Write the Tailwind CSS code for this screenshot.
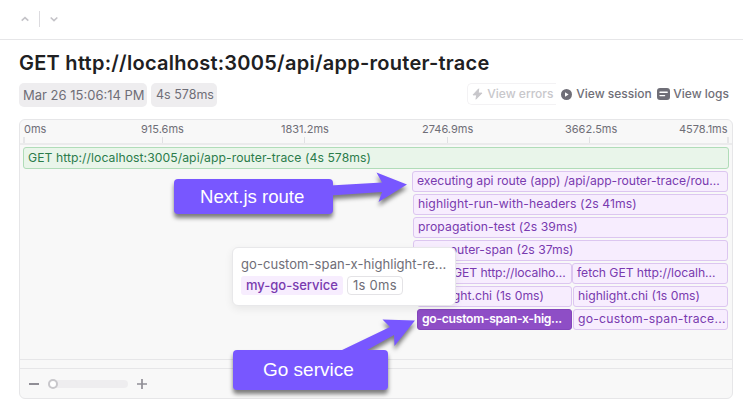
<!DOCTYPE html>
<html lang="en">
<head>
<meta charset="utf-8">
<title>Trace</title>
<script src="https://cdn.jsdelivr.net/npm/@tailwindcss/browser@4"></script>
</head>
<body class="relative w-[743px] h-[417px] overflow-hidden bg-white font-['Inter',sans-serif] text-[13px] text-[#6f6e77] whitespace-nowrap">
<header class="flex items-center h-10 border-b border-[#e6e6e8] pl-5 pb-px">
  <svg class="w-[10px] h-[10px]" viewBox="0 0 10 10" fill="none" stroke="#c4c3c8" stroke-width="1.6"><path d="M1.7 6.7 5 3.6l3.3 3.1"/></svg>
  <div class="w-px h-4 bg-[#dcdbdf] ml-[9px] mr-[9px]"></div>
  <svg class="w-[10px] h-[10px]" viewBox="0 0 10 10" fill="none" stroke="#c4c3c8" stroke-width="1.6"><path d="M1.7 3.5 5 6.6l3.3-3.1"/></svg>
</header>
<main class="pl-[19px]">
  <h1 class="pt-[9px] h-[43px] text-[20px] leading-[28px] font-semibold text-[#202022] tracking-[0.26px]">GET http://localhost:3005/api/app-router-trace</h1>
  <div class="flex justify-between h-6 w-[710px]">
    <div class="flex gap-1">
      <span class="w-32 h-6 rounded-[5px] bg-[#eeedef] pl-1 leading-6">Mar 26 15:06:14 PM</span>
      <span class="w-[66px] h-6 rounded-[5px] bg-[#eeedef] pl-[5px] leading-6 text-[12.5px]">4s 578ms</span>
    </div>
    <div class="flex h-[22px] items-center font-medium text-[12px]">
      <span class="flex items-center h-[22px] w-[89px] border-y border-l border-[#f3f2f4] rounded-l-[5px] pl-1 gap-1 text-[#c8c7cb]">
        <svg class="shrink-0 w-[11px] h-3" viewBox="0 0 11 12" fill="#c8c7cb"><path d="M6.700.800 1 6.900h3.700L4 11.200 10 5.100H6.200z" stroke="#c8c7cb" stroke-linejoin="round"/></svg>View errors</span>
      <span class="flex items-center gap-1 w-[101px] pl-[5px]">
        <svg class="shrink-0 w-[11px] h-[11px]" viewBox="0 0 11 11"><circle cx="5.5" cy="5.5" r="5.5" fill="#6f6e77"/><path d="M4 3.2v4.600l3.600-2.300z" fill="#fff"/></svg>View session</span>
      <span class="flex items-center gap-[3px]">
        <svg class="shrink-0 w-[13px] h-3" viewBox="0 0 13 12"><rect width="13" height="12" rx="3" fill="#6f6e77"/><path d="M3 4.300h7.200M3 7.600h4.600" stroke="#fff" stroke-width="1.4" stroke-linecap="round"/></svg>View logs</span>
    </div>
  </div>
  <section class="mt-3 w-[714px] h-[280px] rounded-[6px] border border-[#e6e6e8] bg-[#f8f8f8]">
    <div class="flex h-[25px] border-b-2 border-[#ebebec] text-[11px] leading-[18px]">
      <div class="w-[121px] pl-[3px]"><div class="pl-px">0ms</div><div class="w-[2px] h-[6px] -mt-px bg-[#e6e6e8]"></div></div>
      <div class="w-[140px]"><div>915.6ms</div><div class="w-px h-[6px] -mt-px ml-[21px] bg-[#e0e0e3]"></div></div>
      <div class="w-[142px]"><div>1831.2ms</div><div class="w-px h-[6px] -mt-px ml-[23px] bg-[#e0e0e3]"></div></div>
      <div class="w-[142px]"><div class="-ml-px">2746.9ms</div><div class="w-px h-[6px] -mt-px ml-[24px] bg-[#e0e0e3]"></div></div>
      <div class="w-[114px]"><div>3662.5ms</div><div class="w-px h-[6px] -mt-px ml-[24px] bg-[#e0e0e3]"></div></div>
      <div><div>4578.1ms</div><div class="w-[2px] h-[6px] -mt-px ml-[48px] bg-[#e6e6e8]"></div></div>
    </div>
    <div class="h-[215px] pt-[2px] pl-[3px] border-b border-[#e6e6e8] text-[12.2px] text-[#793aaf]">
      <div class="h-[22px] w-[706px] rounded-[3px] border border-[#b0dcb8] bg-[#e9f5ea] text-[#2b7c4a] pl-1 leading-5 tracking-[0.06px]">GET http://localhost:3005/api/app-router-trace (4s 578ms)</div>
      <div class="flex flex-col items-end gap-[2px] w-[705px] pt-[2px] leading-[18px]">
        <div class="h-[21px] w-[316px] rounded-[3px] border border-[#dcc6f0] bg-[#f7edfe] pl-1 tracking-[-0.02px]">executing api route (app) /api/app-router-trace/rou...</div>
        <div class="h-[21px] w-[315px] rounded-[3px] border border-[#dcc6f0] bg-[#f7edfe] pl-1 tracking-[0.1px]">highlight-run-with-headers (2s 41ms)</div>
        <div class="h-[21px] w-[315px] rounded-[3px] border border-[#dcc6f0] bg-[#f7edfe] pl-1 tracking-[0.06px]">propagation-test (2s 39ms)</div>
        <div class="h-[21px] w-[315px] rounded-[3px] border border-[#dcc6f0] bg-[#f7edfe] pl-1">app-router-span (2s 37ms)</div>
        <div class="flex">
          <div class="h-[21px] w-[156px] rounded-[3px] border border-[#dcc6f0] bg-[#f7edfe] pl-1 tracking-[-0.1px]">fetch GET http://localho...</div>
          <div class="h-[21px] w-[156px] rounded-[3px] border border-[#dcc6f0] bg-[#f7edfe] pl-1 tracking-[-0.06px]">fetch GET http://localh...</div>
        </div>
        <div class="flex gap-px">
          <div class="h-[21px] w-[155px] rounded-[3px] border border-[#dcc6f0] bg-[#f7edfe] pl-1">highlight.chi (1s 0ms)</div>
          <div class="h-[21px] w-[155px] rounded-[3px] border border-[#dcc6f0] bg-[#f7edfe] pl-1">highlight.chi (1s 0ms)</div>
        </div>
        <div class="flex gap-px">
          <div class="h-[21px] w-[155px] rounded-[3px] border border-[#8445bc] bg-[#8e4ec6] pl-1 text-white font-semibold tracking-[-0.3px]">go-custom-span-x-hig...</div>
          <div class="h-[21px] w-[155px] rounded-[3px] border border-[#dcc6f0] bg-[#f7edfe] pl-1 tracking-[0.24px]">go-custom-span-trace...</div>
        </div>
      </div>
    </div>
    <div class="h-[9px] border-b border-[#e6e6e8]"></div>
    <div class="flex items-center h-[29px] pl-[9px]">
      <div class="w-[10px] h-[2px] bg-[#908e96]"></div>
      <div class="flex items-center ml-[9px] w-20 h-2 rounded-full bg-[#eeedef]"><div class="w-[10px] h-[10px] shrink-0 rounded-full border-2 border-[#c8c7cb] bg-white"></div></div>
      <svg class="ml-[9px] w-[10px] h-[10px]" viewBox="0 0 10 10" stroke="#908e96" stroke-width="1.7"><path d="M0 5h10M5 0v10"/></svg>
    </div>
  </section>
</main>
<aside class="absolute left-[232px] top-[247px] w-[224px] h-[59px] rounded-[6px] border border-[#e8e8ea] bg-white shadow-[0_3px_8px_rgba(0,0,0,0.07)] pl-2 pt-[6px]">
  <div class="leading-5 tracking-[0.06px]">go-custom-span-x-highlight-re...</div>
  <div class="flex gap-1 mt-[2px] leading-[19px]">
    <span class="w-[102px] h-[19px] rounded-[3px] bg-[#f7edfe] pl-[5px] text-[#793aaf] font-medium">my-go-service</span>
    <span class="w-[56px] h-[19px] rounded-[4px] border border-[#e4e3e6] pl-[5px] leading-[17px] tracking-[0.25px]">1s 0ms</span>
  </div>
</aside>
<svg class="absolute left-0 top-0 w-[743px] h-[417px] drop-shadow-[0_4px_2px_rgba(0,0,0,0.5)]" viewBox="0 0 743 417" fill="#7857ff">
  <path d="M330 185.5 382 182.500 376.500 172.500 407 184.500 378.500 202 382 192 330 195.500z"/>
  <path d="M340 351 390 327 382.500 319.500 415 320.500 394.500 346 394 335 360 354z"/>
  <rect x="174" y="179" width="159" height="35" rx="4"/>
  <rect x="233" y="350" width="155" height="40" rx="4"/>
</svg>
<div class="absolute left-[174px] top-[179px] w-[159px] h-[35px] pl-[26px] leading-[35px] text-[18.6px] text-white font-['Liberation_Sans',Arial,sans-serif]">Next.js route</div>
<div class="absolute left-[233px] top-[350px] w-[155px] h-[40px] pl-[30px] leading-[39px] text-[19px] text-white font-['Liberation_Sans',Arial,sans-serif]">Go service</div>
</body>
</html>
